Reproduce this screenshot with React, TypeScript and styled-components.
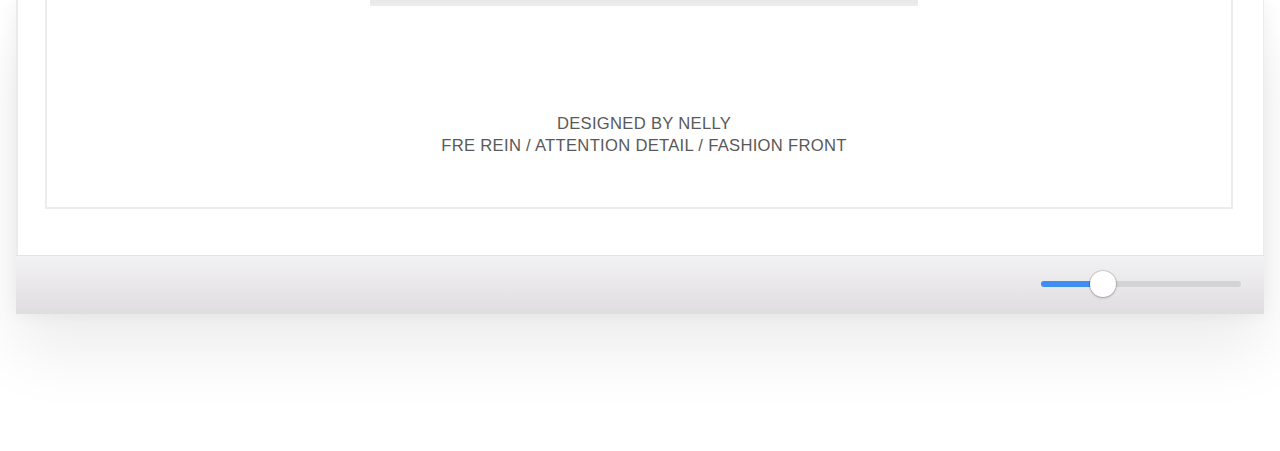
import * as React from 'react';
import styled, { createGlobalStyle } from 'styled-components';

const GlobalStyle = createGlobalStyle`
  html, body {
    margin: 0;
    padding: 0;
    background: #ffffff;
    font-family: "Liberation Sans", Arial, sans-serif;
  }
`;

const Stage = styled.div`
  height: 451px;
  overflow: hidden;
  padding: 0 16px;
  box-sizing: border-box;
`;

const Window = styled.div`
  display: flex;
  flex-direction: column;
  box-shadow: 0 40px 60px rgba(0, 0, 0, 0.07), 0 0 18px rgba(0, 0, 0, 0.06);
`;

const Content = styled.div`
  background: #ffffff;
  border-left: 2px solid #ebebeb;
  border-right: 1px solid #ebebeb;
  padding: 0 30px 46px 27px;
`;

const Card = styled.div`
  display: flex;
  flex-direction: column;
  border: 2px solid #ececec;
  border-top: none;
  padding-bottom: 50px;
`;

const ImageEdge = styled.div`
  align-self: flex-start;
  margin-left: 323px;
  width: 548px;
  height: 6px;
  background: linear-gradient(#e9e9e9, #ededed);
`;

const Credits = styled.div`
  margin-top: 107px;
  padding-left: 10px;
  text-align: center;
  color: #595959;
  font-size: 16.6px;
  line-height: 22px;
  letter-spacing: 0.3px;
`;

const BottomBar = styled.div`
  display: flex;
  align-items: center;
  justify-content: flex-end;
  height: 58px;
  padding-right: 23px;
  border-top: 1px solid #e3e3e5;
  background: linear-gradient(#f2f1f3, #dfdde0);
`;

const Track = styled.div`
  position: relative;
  width: 200px;
  height: 6px;
  border-radius: 3px;
  background: #d3d3d5;
  margin-top: -3px;
`;

const Fill = styled.div`
  height: 100%;
  border-radius: 3px;
  background: #3e8ef2;
`;

const Thumb = styled.div`
  position: absolute;
  top: 50%;
  width: 26px;
  height: 26px;
  border-radius: 50%;
  background: #ffffff;
  box-shadow: 0 0 0 1px rgba(0, 0, 0, 0.12), 0 1px 3px rgba(0, 0, 0, 0.2);
  transform: translate(-50%, -50%);
`;

function Slider({ value }: { value: number }): JSX.Element {
  return (
    <Track>
      <Fill style={{ width: `${value - 4}%` }} />
      <Thumb style={{ left: `${value}%` }} />
    </Track>
  );
}

export default function App(): JSX.Element {
  return (
    <>
      <GlobalStyle />
      <Stage>
        <Window>
          <Content>
            <Card>
              <ImageEdge />
              <Credits>
                DESIGNED BY NELLY
                <br />
                FRE REIN / ATTENTION DETAIL / FASHION FRONT
              </Credits>
            </Card>
          </Content>
          <BottomBar>
            <Slider value={31} />
          </BottomBar>
        </Window>
      </Stage>
    </>
  );
}
